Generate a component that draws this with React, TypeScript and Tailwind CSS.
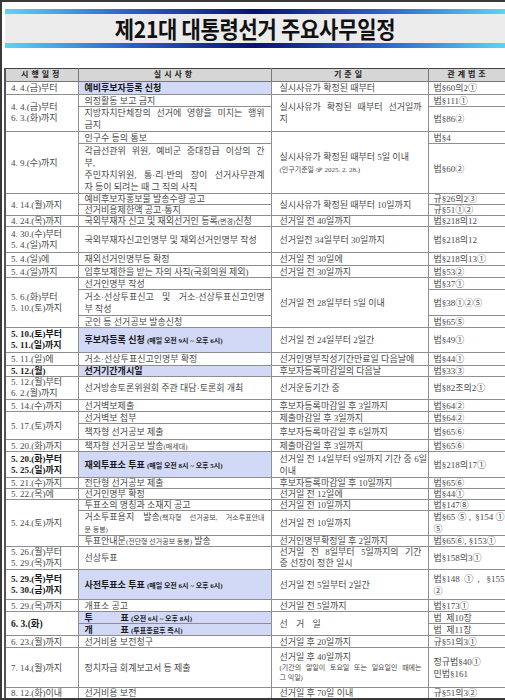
import * as React from "react";

// ---------------------------------------------------------------------------
// Cell styles
// ---------------------------------------------------------------------------

const line = "border border-[#8e8e8e] align-middle whitespace-nowrap p-0";
const c1 = `${line} border-l-2 border-l-[#555] pl-[5px] pr-[2px]`;
const c2 = `${line} pl-[6px] pr-[6px]`;
const c3 = `${line} pl-[8px] pr-[6px]`;
const c4 = `${line} pl-[5px] pr-[3px]`;
const two = "leading-[11px]";
const hl = "bg-[#d2d9f6] font-bold text-[#1a1a1a]";
const bold = "font-bold text-[#1a1a1a]";

function J({ children }: { children: React.ReactNode }) {
  return <span className="block text-justify [text-align-last:justify]">{children}</span>;
}

// small parenthetical text; line-height kept inside the parent line box
function S({ children }: { children: React.ReactNode }) {
  return <span className="text-[7px] leading-none">{children}</span>;
}

function Bar() {
  return (
    <div className="h-[5px] bg-[linear-gradient(to_right,#5fd2f6,#2a63c4_25%,#0b1170_50%,#2a63c4_75%,#5fd2f6)]" />
  );
}

function Head({ children }: { children: React.ReactNode }) {
  return (
    <th className="border border-[#777] border-t-[#444] bg-[#d6d6d6] p-0 text-center text-[8px] font-bold tracking-[3px] text-[#222]">
      {children}
    </th>
  );
}

export default function App() {
  return (
    <div className="relative h-[700px] w-[505px] overflow-hidden border-t-2 border-b-2 border-l-2 border-[#3a3a3a] bg-white font-['Noto_Sans_CJK_KR',sans-serif]">
      {/* Title band */}
      <div className="ml-[3px] mt-[7px]">
        <Bar />
        <div className="flex h-[29px] items-center justify-center bg-[#ececec]">
          <span className="inline-block scale-y-110 text-[21px] font-bold leading-none tracking-[-0.3px] text-[#111]">
            제21대 대통령선거 주요사무일정
          </span>
        </div>
        <Bar />
      </div>

      {/* Schedule table */}
      <table className="ml-[2px] mt-[20px] w-[503px] table-fixed border-collapse border-b-2 border-b-[#555] font-['Liberation_Serif','Noto_Sans_CJK_KR',serif] text-[9px] leading-[10px] text-[#4a4a4a]">
        <colgroup>
          <col className="w-[73px]" />
          <col className="w-[193px]" />
          <col className="w-[157px]" />
          <col className="w-[80px]" />
        </colgroup>
        <thead>
          <tr className="h-[13px]">
            <th className="border border-[#777] border-t-[#444] border-l-2 border-l-[#555] bg-[#d6d6d6] p-0 text-center text-[8px] font-bold tracking-[3px] text-[#222]">
              시행일정
            </th>
            <Head>실시사항</Head>
            <Head>기준일</Head>
            <Head>관계법조</Head>
          </tr>
        </thead>
        <tbody>
          <tr className="h-[13px]">
            <td className={c1}>4. 4.(금)부터</td>
            <td className={`${c2} ${hl}`}>예비후보자등록 신청</td>
            <td className={c3}>실시사유가 확정된 때부터</td>
            <td className={c4}>법§60의2①</td>
          </tr>

          <tr className="h-[12px]">
            <td rowSpan={2} className={`${c1} ${two}`}>
              4. 4.(금)부터
              <br />
              6. 3.(화)까지
            </td>
            <td className={c2}>의정활동 보고 금지</td>
            <td rowSpan={2} className={`${c3} leading-[12px]`}>
              <J>실시사유가 확정된 때부터 선거일까</J>지
            </td>
            <td className={c4}>법§111①</td>
          </tr>
          <tr className="h-[25px]">
            <td className={`${c2} leading-[12px]`}>
              <J>지방자치단체장의 선거에 영향을 미치는 행위</J>금지
            </td>
            <td className={c4}>법§86②</td>
          </tr>

          <tr className="h-[12px]">
            <td rowSpan={2} className={c1}>4. 9.(수)까지</td>
            <td className={c2}>인구수 등의 통보</td>
            <td rowSpan={2} className={`${c3} leading-[12px]`}>
              실시사유가 확정된 때부터 5일 이내
              <br />
              <S>(인구기준일 ☞ 2025. 2. 28.)</S>
            </td>
            <td className={c4}>법§4</td>
          </tr>
          <tr className="h-[50px]">
            <td className={`${c2} leading-[12px]`}>
              <J>각급선관위 위원, 예비군 중대장급 이상의 간</J>
              부,
              <J>주민자치위원, 통·리·반의 장이 선거사무관계</J>
              자 등이 되려는 때 그 직의 사직
            </td>
            <td className={c4}>법§60②</td>
          </tr>

          <tr className="h-[11px]">
            <td rowSpan={2} className={c1}>4. 14.(월)까지</td>
            <td className={c2}>예비후보자홍보물 발송수량 공고</td>
            <td rowSpan={2} className={c3}>실시사유가 확정된 때부터 10일까지</td>
            <td className={c4}>규§26의2③</td>
          </tr>
          <tr className="h-[11px]">
            <td className={c2}>선거비용제한액 공고·통지</td>
            <td className={c4}>규§51①②</td>
          </tr>

          <tr className="h-[11px]">
            <td className={c1}>4. 24.(목)까지</td>
            <td className={c2}>
              국외부재자 신고 및 재외선거인 등록<S>(변경)</S>신청
            </td>
            <td className={c3}>선거일 전 40일까지</td>
            <td className={c4}>법§218의12</td>
          </tr>

          <tr className="h-[26px]">
            <td className={`${c1} ${two}`}>
              4. 30.(수)부터
              <br />
              5. 4.(일)까지
            </td>
            <td className={c2}>국외부재자신고인명부 및 재외선거인명부 작성</td>
            <td className={c3}>선거일전 34일부터 30일까지</td>
            <td className={c4}>법§218의12</td>
          </tr>

          <tr className="h-[13px]">
            <td className={c1}>5. 4.(일)에</td>
            <td className={c2}>재외선거인명부등 확정</td>
            <td className={c3}>선거일 전 30일에</td>
            <td className={c4}>법§218의13①</td>
          </tr>

          <tr className="h-[12px]">
            <td className={c1}>5. 4.(일)까지</td>
            <td className={c2}>입후보제한을 받는 자의 사직(국회의원 제외)</td>
            <td className={c3}>선거일 전 30일까지</td>
            <td className={c4}>법§53②</td>
          </tr>

          <tr className="h-[12px]">
            <td rowSpan={3} className={`${c1} ${two}`}>
              5. 6.(화)부터
              <br />
              5. 10.(토)까지
            </td>
            <td className={c2}>선거인명부 작성</td>
            <td rowSpan={3} className={c3}>선거일 전 28일부터 5일 이내</td>
            <td className={c4}>법§37①</td>
          </tr>
          <tr className="h-[26px]">
            <td className={`${c2} leading-[12px]`}>
              <J>거소·선상투표신고 및 거소·선상투표신고인명</J>부 작성
            </td>
            <td className={c4}>법§38①②⑤</td>
          </tr>
          <tr className="h-[12px]">
            <td className={c2}>군인 등 선거공보 발송신청</td>
            <td className={c4}>법§65⑤</td>
          </tr>

          <tr className="h-[25px]">
            <td className={`${c1} ${two} ${bold}`}>
              5. 10.(토)부터
              <br />
              5. 11.(일)까지
            </td>
            <td className={`${c2} ${hl}`}>
              후보자등록 신청 <S>(매일 오전 9시 ~ 오후 6시)</S>
            </td>
            <td className={c3}>선거일 전 24일부터 2일간</td>
            <td className={c4}>법§49①</td>
          </tr>

          <tr className="h-[13px]">
            <td className={c1}>5. 11.(일)에</td>
            <td className={c2}>거소·선상투표신고인명부 확정</td>
            <td className={c3}>선거인명부작성기간만료일 다음날에</td>
            <td className={c4}>법§44①</td>
          </tr>

          <tr className="h-[11px]">
            <td className={`${c1} ${bold}`}>5. 12.(월)</td>
            <td className={`${c2} ${hl}`}>선거기간개시일</td>
            <td className={c3}>후보자등록마감일의 다음날</td>
            <td className={c4}>법§33③</td>
          </tr>

          <tr className="h-[23px]">
            <td className={`${c1} ${two}`}>
              5. 12.(월)부터
              <br />
              6. 2.(월)까지
            </td>
            <td className={c2}>선거방송토론위원회 주관 대담·토론회 개최</td>
            <td className={c3}>선거운동기간 중</td>
            <td className={c4}>법§82조의2①</td>
          </tr>

          <tr className="h-[12px]">
            <td className={c1}>5. 14.(수)까지</td>
            <td className={c2}>선거벽보제출</td>
            <td className={c3}>후보자등록마감일 후 3일까지</td>
            <td className={c4}>법§64②</td>
          </tr>

          <tr className="h-[12px]">
            <td rowSpan={2} className={c1}>5. 17.(토)까지</td>
            <td className={c2}>선거벽보 첩부</td>
            <td className={c3}>제출마감일 후 3일까지</td>
            <td className={c4}>법§64②</td>
          </tr>
          <tr className="h-[16px]">
            <td className={c2}>책자형 선거공보 제출</td>
            <td className={c3}>후보자등록마감일 후 6일까지</td>
            <td className={c4}>법§65⑥</td>
          </tr>

          <tr className="h-[12px]">
            <td className={c1}>5. 20.(화)까지</td>
            <td className={c2}>
              책자형 선거공보 발송<S>(매세대)</S>
            </td>
            <td className={c3}>제출마감일 후 3일까지</td>
            <td className={c4}>법§65⑥</td>
          </tr>

          <tr className="h-[26px]">
            <td className={`${c1} ${two} ${bold}`}>
              5. 20.(화)부터
              <br />
              5. 25.(일)까지
            </td>
            <td className={`${c2} ${hl}`}>
              재외투표소 투표 <S>(매일 오전 8시 ~ 오후 5시)</S>
            </td>
            <td className={`${c3} leading-[12px]`}>
              <J>선거일 전 14일부터 9일까지 기간 중 6일</J>이내
            </td>
            <td className={c4}>법§218의17①</td>
          </tr>

          <tr className="h-[11px]">
            <td className={c1}>5. 21.(수)까지</td>
            <td className={c2}>전단형 선거공보 제출</td>
            <td className={c3}>후보자등록마감일 후 10일까지</td>
            <td className={c4}>법§65⑥</td>
          </tr>

          <tr className="h-[11px]">
            <td className={c1}>5. 22.(목)에</td>
            <td className={c2}>선거인명부 확정</td>
            <td className={c3}>선거일 전 12일에</td>
            <td className={c4}>법§44①</td>
          </tr>

          <tr className="h-[11px]">
            <td rowSpan={3} className={c1}>5. 24.(토)까지</td>
            <td className={c2}>투표소의 명칭과 소재지 공고</td>
            <td className={c3}>선거일 전 10일까지</td>
            <td className={c4}>법§147⑧</td>
          </tr>
          <tr className="h-[25px]">
            <td className={`${c2} leading-[12px]`}>
              <J>
                거소투표용지 발송<S>(책자형 선거공보, 거소투표안내</S>
              </J>
              <S>문 동봉)</S>
            </td>
            <td className={c3}>선거일 전 10일까지</td>
            <td className={`${c4} leading-[12px]`}>
              <J>법§65⑤, §154①</J>⑤
            </td>
          </tr>
          <tr className="h-[11px]">
            <td className={c2}>
              투표안내문<S>(전단형 선거공보 동봉)</S> 발송
            </td>
            <td className={c3}>선거인명부확정일 후 2일까지</td>
            <td className={c4}>법§65⑥, §153①</td>
          </tr>

          <tr className="h-[22px]">
            <td className={`${c1} ${two}`}>
              5. 26.(월)부터
              <br />
              5. 29.(목)까지
            </td>
            <td className={c2}>선상투표</td>
            <td className={`${c3} leading-[11px]`}>
              <J>선거일 전 8일부터 5일까지의 기간</J>중 선장이 정한 일시
            </td>
            <td className={c4}>법§158의3①</td>
          </tr>

          <tr className="h-[30px]">
            <td className={`${c1} ${two} ${bold}`}>
              5. 29.(목)부터
              <br />
              5. 30.(금)까지
            </td>
            <td className={`${c2} ${hl}`}>
              사전투표소 투표 <S>(매일 오전 6시 ~ 오후 6시)</S>
            </td>
            <td className={c3}>선거일 전 5일부터 2일간</td>
            <td className={`${c4} leading-[12px]`}>
              <J>법§148①, §155</J>②
            </td>
          </tr>

          <tr className="h-[12px]">
            <td className={c1}>5. 29.(목)까지</td>
            <td className={c2}>개표소 공고</td>
            <td className={c3}>선거일 전 5일까지</td>
            <td className={c4}>법§173①</td>
          </tr>

          <tr className="h-[12px]">
            <td rowSpan={2} className={`${c1} text-[9.5px] ${bold}`}>
              6. 3.(화)
            </td>
            <td className={`${c2} ${hl}`}>
              <span className="inline-block w-[36px]">투</span>표 <S>(오전 6시 ~ 오후 8시)</S>
            </td>
            <td rowSpan={2} className={`${c3} tracking-[3px]`}>선 거 일</td>
            <td className={c4}>법 &nbsp;제10장</td>
          </tr>
          <tr className="h-[12px]">
            <td className={`${c2} ${hl}`}>
              <span className="inline-block w-[36px]">개</span>표 <S>(투표종료후 즉시)</S>
            </td>
            <td className={c4}>법 &nbsp;제11장</td>
          </tr>

          <tr className="h-[12px]">
            <td className={c1}>6. 23.(월)까지</td>
            <td className={c2}>선거비용 보전청구</td>
            <td className={c3}>선거일 후 20일까지</td>
            <td className={c4}>규§51의3①</td>
          </tr>

          <tr className="h-[40px]">
            <td className={c1}>7. 14.(월)까지</td>
            <td className={c2}>정치자금 회계보고서 등 제출</td>
            <td className={`${c3} leading-[11px]`}>
              선거일 후 40일까지
              <div className="text-[7px] leading-[10px]">
                <J>(기간의 말일이 토요일 또는 일요일인 때에는</J>
                그 익일)
              </div>
            </td>
            <td className={`${c4} leading-[12px]`}>
              정규법§40①
              <br />
              민법§161
            </td>
          </tr>

          <tr className="h-[11px]">
            <td className={c1}>8. 12.(화)이내</td>
            <td className={c2}>선거비용 보전</td>
            <td className={c3}>선거일 후 70일 이내</td>
            <td className={c4}>규§51의3②</td>
          </tr>
        </tbody>
      </table>
    </div>
  );
}
